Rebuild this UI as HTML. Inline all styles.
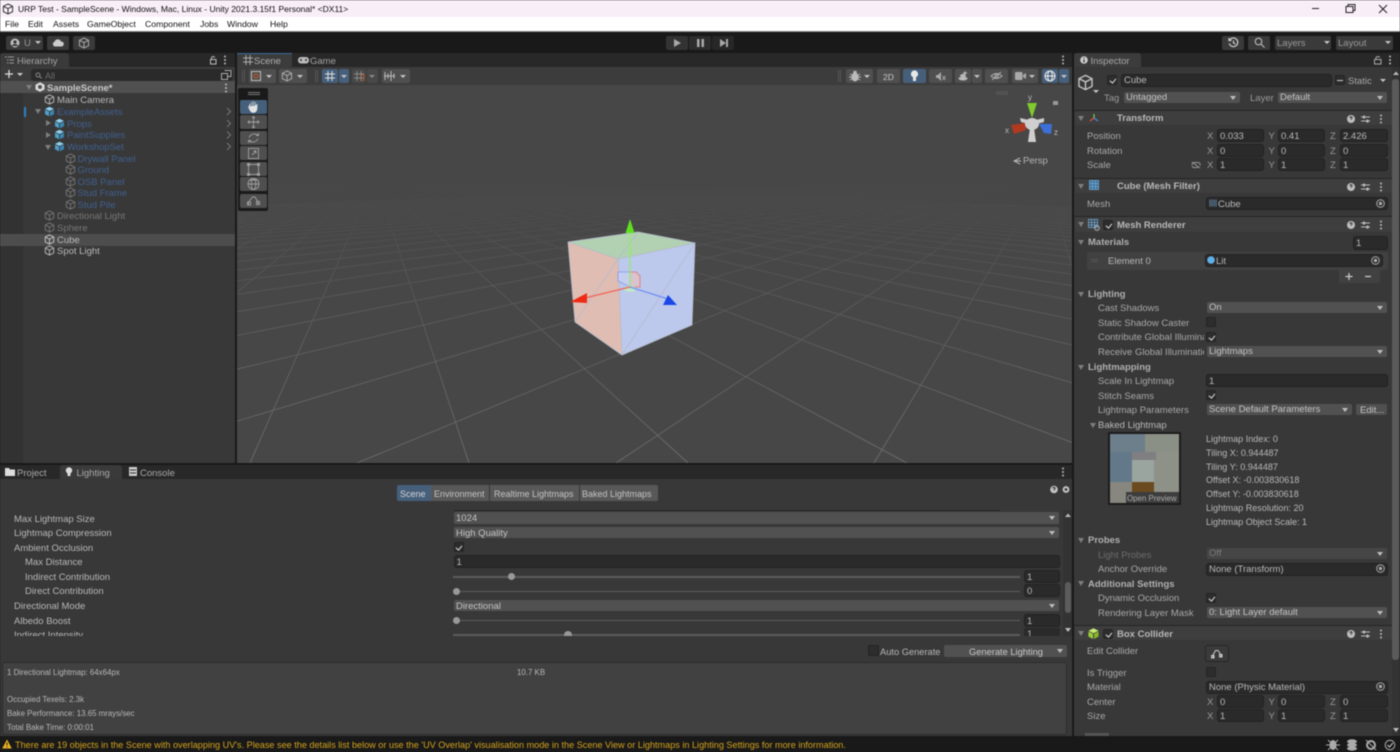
<!DOCTYPE html>
<html lang="en"><head><meta charset="utf-8"><title>URP Test - SampleScene</title>
<style>
html,body{margin:0;padding:0;background:#191919;width:1400px;height:752px;overflow:hidden}
#r{position:relative;width:1400px;height:752px;overflow:hidden;font:9.5px/12px "Liberation Sans",sans-serif;color:#b8b8b8;filter:blur(.4px)}
#r div,#r i,#r b,#r svg{position:absolute;display:block}
i,b{font-style:normal;white-space:nowrap;height:12px;margin-top:1px}
b{font-weight:bold}
.n{margin-top:0}
.dim{color:#777}.blu{color:#40608f}.blk{color:#111}
.dd{background:#515151;border-radius:2px;height:11px;color:#c4c4c4}
.dd>i{left:2px;top:-1px}
.dd:after{content:"";position:absolute;right:4px;top:4px;border:3.5px solid transparent;border-top:4px solid #bdbdbd;border-bottom:0}
.f{background:#2a2a2a;border:1px solid #212121;border-radius:3px;box-sizing:border-box;height:13px}
.f>i{left:2px;top:0}
.cb{background:#2d2d2d;border:1px solid #232323;border-radius:2px;width:10px;height:10px;box-sizing:border-box}
.ck:after{content:"";position:absolute;left:2.5px;top:.5px;width:2.5px;height:5px;border:solid #ddd;border-width:0 1.2px 1.2px 0;transform:rotate(40deg)}
.btn{background:#3a3a3a;border-radius:2px;height:14px}
.tb{background:#4f4f4f;border-radius:2px;height:14px}
.bl{background:#46607c}
.tri{width:0;height:0;border:3.5px solid transparent;border-top:5px solid #7e7e7e;border-bottom:0}
.trr{width:0;height:0;border:3.5px solid transparent;border-left:5px solid #7e7e7e;border-right:0}
.sm{border:3px solid transparent;border-top:3.5px solid #c4c4c4;border-bottom:0;width:0;height:0}
.sep{background:#262626;height:1px}
.hd{background:#3e3e3e;height:14px;left:1075px;width:317px}
.dots{width:2px;height:2px;background:#bbb;box-shadow:0 -3.5px #bbb,0 3.5px #bbb;border-radius:1px}
.s8{font-size:7.9px}
.info{font-size:9.05px;margin-top:0}
</style></head><body><div id="r">
<svg width="0" height="0" style="position:absolute"><defs>
<symbol id="c" viewBox="0 0 12 12"><path d="M6 1 10.6 3.3V8.7L6 11 1.4 8.7V3.3ZM1.4 3.3 6 5.6 10.6 3.3M6 5.6V11" fill="none" stroke="currentColor" stroke-width="1"/></symbol>
<symbol id="p" viewBox="0 0 12 12"><path d="M6 .8 10.8 3.2 6 5.5 1.2 3.2Z" fill="#8fd0ee"/><path d="M1.1 4 5.5 6.2V11.2L1.1 9Z" fill="#4f9fca"/><path d="M10.9 4 6.5 6.2V11.2L10.9 9Z" fill="#3b86b3"/></symbol>
<symbol id="h" viewBox="0 0 42 10"><circle cx="4" cy="5" r="4" fill="#bdbdbd"/><path d="M3 4Q3 2.8 4 2.8 5.2 2.8 5 4 4.2 4.6 4 5.6" stroke="#333" fill="none"/><path d="M14 3H23M14 7H23" stroke="#bbb"/><rect x="16" y="1.6" width="2" height="3" fill="#bbb"/><rect x="19.5" y="5.6" width="2" height="3" fill="#bbb"/></symbol>
</defs></svg>

<!-- title + menu -->
<div style="left:0;top:0;width:1400px;height:17px;background:#f8eef8"></div>
<div style="left:0;top:17px;width:1400px;height:14px;background:#fff"></div>
<div style="left:0;top:31px;width:1400px;height:1px;background:#8a8a8a"></div>
<svg style="left:2px;top:3px" width="12" height="12"><use href="#c" color="#333"/></svg>
<i class="blk" style="left:18px;top:2px;font-size:8.5px">URP Test - SampleScene - Windows, Mac, Linux - Unity 2021.3.15f1 Personal* &lt;DX11&gt;</i>
<i class="blk" style="left:5px;top:17px;font-size:8.7px">File</i>
<i class="blk" style="left:28px;top:17px;font-size:8.7px">Edit</i>
<i class="blk" style="left:53px;top:17px;font-size:8.7px">Assets</i>
<i class="blk" style="left:87px;top:17px;font-size:8.7px">GameObject</i>
<i class="blk" style="left:145px;top:17px;font-size:8.7px">Component</i>
<i class="blk" style="left:200px;top:17px;font-size:8.7px">Jobs</i>
<i class="blk" style="left:227px;top:17px;font-size:8.7px">Window</i>
<i class="blk" style="left:270px;top:17px;font-size:8.7px">Help</i>
<svg style="left:1310px;top:2px" width="85" height="12" fill="none" stroke="#222"><path d="M2 6.5H9"/><path d="M36 4.5H43V10.500H36ZM38 4.500V2.500H45V8.500H43"/><path d="M69 3 77 11M77 3 69 11"/></svg>

<!-- main toolbar -->
<div class="btn" style="left:6px;top:36px;width:37px"></div>
<svg style="left:10px;top:38px" width="10" height="10"><circle cx="5" cy="5" r="4.500" fill="#bbb"/><circle cx="5" cy="4" r="1.600" fill="#333"/><path d="M2 8Q5 5 8 8" stroke="#333" fill="#333"/></svg>
<i style="left:24px;top:37px;color:#999">U</i><div class="sm" style="left:35px;top:41px"></div>
<div class="btn" style="left:47px;top:36px;width:22px"></div>
<svg style="left:52px;top:38px" width="12" height="9"><path d="M3 8.500A2.500 2.500 0 0 1 2.500 3.700 3.500 3.500 0 0 1 9 3.500 2.500 2.500 0 0 1 9.500 8.500Z" fill="#ccc"/></svg>
<div class="btn" style="left:73px;top:36px;width:22px"></div>
<svg style="left:78px;top:37px" width="12" height="12" color="#aaa"><use href="#c"/></svg>
<div class="btn" style="left:666px;top:36px;width:22px;background:#333"></div>
<div class="btn" style="left:689px;top:36px;width:22px;background:#2d2d2d"></div>
<div class="btn" style="left:712px;top:36px;width:22px;background:#272727"></div>
<svg style="left:666px;top:36px" width="70" height="14" fill="#a8a8a8"><path d="M8 3 15 7 8 11Z"/><path d="M31 3H33.500V11H31ZM35.500 3H38V11H35.500Z"/><path d="M54 3 60 7 54 11ZM60 3H62V11H60Z"/></svg>
<div class="btn" style="left:1222px;top:36px;width:22px"></div>
<svg style="left:1228px;top:37px" width="11" height="11" fill="none" stroke="#ccc" stroke-width="1.200"><path d="M1.800 3A4.300 4.300 0 1 1 1.300 6.500M1 1V3.500H3.500M5.500 3.500V6L7.500 7"/></svg>
<div class="btn" style="left:1248px;top:36px;width:22px"></div>
<svg style="left:1254px;top:37px" width="11" height="11" fill="none" stroke="#bbb" stroke-width="1.100"><circle cx="4.500" cy="4.500" r="3.300"/><path d="M7 7 10.500 10.500"/></svg>
<div class="btn" style="left:1275px;top:36px;width:56px"></div><i class="dim" style="left:1277px;top:37px;color:#999">Layers</i><div class="sm" style="left:1324px;top:41px"></div>
<div class="btn" style="left:1336px;top:36px;width:57px"></div><i class="dim" style="left:1338px;top:37px;color:#999">Layout</i><div class="sm" style="left:1385px;top:41px"></div>

<!-- hierarchy -->
<div style="left:0;top:53px;width:235px;height:14px;background:#282828"></div>
<div style="left:0;top:53px;width:69px;height:14px;background:#3a3a3a;border-radius:3px 3px 0 0"></div>
<svg style="left:5px;top:56px" width="10" height="8" stroke="#999"><path d="M0 1H2M3 1H9M2 4H3.500M4.500 4H9M2 7H3.500M4.500 7H9"/></svg>
<i style="left:17px;top:55px;color:#a5a5a5">Hierarchy</i>
<svg style="left:208px;top:55px" width="10" height="10" fill="none" stroke="#bbb"><path d="M2.500 4.500H8V9H2.500ZM3.500 4.500V2.500Q5 .5 6.800 2.500"/></svg>
<div class="dots" style="left:224px;top:59px"></div>
<div style="left:0;top:67px;width:235px;height:397px;background:#383838"></div>
<div style="left:0;top:67px;width:235px;height:14px;background:#3c3c3c"></div>
<div style="left:0;top:93px;width:23px;height:371px;background:#323232"></div>
<svg style="left:4px;top:69px" width="20" height="10" stroke="#ddd"><path d="M5 1V9M1 5H9" stroke-width="1.300"/><path d="M13 4H19L16 7Z" fill="#ccc" stroke="none"/></svg>
<div style="left:31px;top:69px;width:202px;height:12px;background:#2a2a2a;border-radius:3px"></div>
<svg style="left:35px;top:72px" width="8" height="7" fill="none" stroke="#888"><circle cx="3" cy="3" r="2"/><path d="M4.500 4.500 7 6.500"/></svg>
<i style="left:45px;top:69px;color:#6c6c6c;font-size:9px">All</i>
<svg style="left:221px;top:70px" width="11" height="10" fill="none" stroke="#aaa"><path d="M3.500 .5H10V6.500H7M.5 3.500H6.500V9.500H.5Z"/></svg>
<div style="left:0;top:81px;width:235px;height:12px;background:#505050"></div>
<div class="tri" style="left:26px;top:85px"></div>
<svg style="left:35px;top:82px" width="10" height="10" color="#ddd"><path d="M5 .3 9.500 2.800V7.500L5 9.800.5 7.500V2.800Z" fill="#ddd"/><circle cx="5" cy="5" r="2" fill="#505050"/></svg>
<b style="left:47px;top:82px;color:#c8c8c8">SampleScene*</b>
<div class="dots" style="left:225px;top:87px"></div>
<div style="left:0;top:234px;width:235px;height:12px;background:#4d4d4d"></div>
<div style="left:24px;top:107px;width:1.500px;height:10px;background:#2f7fc0"></div>

<svg style="left:44px;top:94px" width="11" height="11" color="#bbb"><use href="#c"/></svg><i style="left:57px;top:94px">Main Camera</i>
<div class="tri" style="left:35px;top:109px"></div><svg style="left:44px;top:106px" width="11" height="11"><use href="#p"/></svg><i class="blu" style="left:57px;top:106px">ExampleAssets</i>
<div class="trr" style="left:46px;top:120px"></div><svg style="left:54px;top:118px" width="11" height="11"><use href="#p"/></svg><i class="blu" style="left:67px;top:118px">Props</i>
<div class="trr" style="left:46px;top:132px"></div><svg style="left:54px;top:129px" width="11" height="11"><use href="#p"/></svg><i class="blu" style="left:67px;top:129px">PaintSupplies</i>
<div class="tri" style="left:45px;top:145px"></div><svg style="left:54px;top:141px" width="11" height="11"><use href="#p"/></svg><i class="blu" style="left:67px;top:141px">WorkshopSet</i>
<svg style="left:65px;top:153px" width="11" height="11" color="#777"><use href="#c"/></svg><i class="blu" style="left:77.500px;top:153px">Drywall Panel</i>
<svg style="left:65px;top:164px" width="11" height="11" color="#777"><use href="#c"/></svg><i class="blu" style="left:77.500px;top:164px">Ground</i>
<svg style="left:65px;top:176px" width="11" height="11" color="#777"><use href="#c"/></svg><i class="blu" style="left:77.500px;top:176px">OSB Panel</i>
<svg style="left:65px;top:187px" width="11" height="11" color="#777"><use href="#c"/></svg><i class="blu" style="left:77.500px;top:187px">Stud Frame</i>
<svg style="left:65px;top:199px" width="11" height="11" color="#777"><use href="#c"/></svg><i class="blu" style="left:77.500px;top:199px">Stud Pile</i>
<svg style="left:44px;top:210px" width="11" height="11" color="#777"><use href="#c"/></svg><i class="dim" style="left:57px;top:210px">Directional Light</i>
<svg style="left:44px;top:222px" width="11" height="11" color="#777"><use href="#c"/></svg><i class="dim" style="left:57px;top:222px">Sphere</i>
<svg style="left:44px;top:234px" width="11" height="11" color="#ccc"><use href="#c"/></svg><i style="left:57px;top:234px">Cube</i>
<svg style="left:44px;top:245px" width="11" height="11" color="#bbb"><use href="#c"/></svg><i style="left:57px;top:245px">Spot Light</i>
<svg style="left:226px;top:107px" width="6" height="46" fill="none" stroke="#777"><path d="M1 1 4.500 4.500 1 8M1 13 4.500 16.500 1 20M1 24.500 4.500 28 1 31.500M1 36 4.500 39.500 1 43"/></svg>

<!-- scene -->
<div style="left:237px;top:53px;width:835px;height:14px;background:#282828"></div>
<div style="left:237px;top:53px;width:55px;height:14px;background:#3c3c3c"></div>
<div style="left:237px;top:53px;width:55px;height:1px;background:#3a6c9c"></div>
<svg style="left:243px;top:55px" width="10" height="10" stroke="#aaa"><path d="M3 0V10M7 0V10M0 3H10M0 7H10"/></svg>
<i style="left:254px;top:55px;color:#b0b0b0">Scene</i>
<svg style="left:298px;top:57px" width="11" height="7"><rect width="11" height="6.500" rx="3" fill="#bbb"/><circle cx="3" cy="3" r="1" fill="#333"/><circle cx="8" cy="3" r="1" fill="#333"/></svg>
<i style="left:310px;top:55px;color:#a5a5a5">Game</i>
<div class="dots" style="left:1062px;top:59px"></div>
<div style="left:237px;top:67px;width:835px;height:18px;background:#3c3c3c"></div>
<div class="tb" style="left:249px;top:69px;width:27px"></div><svg style="left:251px;top:71px" width="10" height="10" fill="none" stroke="#bbb"><rect x=".5" y=".5" width="9" height="9"/><circle cx="5" cy="5" r="2" stroke="#c8552a"/></svg><div class="sm" style="left:266px;top:75px"></div>
<div class="tb" style="left:279px;top:69px;width:28px"></div><svg style="left:281px;top:70px" width="12" height="12" color="#aaa"><use href="#c"/></svg><div class="sm" style="left:297px;top:75px"></div>
<div class="tb bl" style="left:322px;top:69px;width:16px"></div><div class="tb bl" style="left:339px;top:69px;width:10px"></div>
<svg style="left:325px;top:71px" width="11" height="10" stroke="#ddd"><path d="M3 0V10M7 0V10M0 3H10M0 7H10"/></svg><div class="sm" style="left:341px;top:75px"></div>
<div class="tb" style="left:352px;top:69px;width:14px;background:#484848"></div><div class="tb" style="left:367px;top:69px;width:11px;background:#484848"></div>
<svg style="left:354px;top:71px" width="11" height="10" stroke="#8a8a8a" fill="none"><path d="M3 0V10M7 0V10M0 3H10M0 7H10"/><path d="M6 4H10V8Q10 10 7 10" stroke="#b5532a"/></svg><div class="sm" style="left:369px;top:75px;border-top-color:#888"></div>
<div class="tb" style="left:382px;top:69px;width:28px"></div>
<svg style="left:384px;top:71px" width="12" height="10" stroke="#bbb"><path d="M1 1V9M4 2.500V7.500M7 0V10M10 2.500V7.500M0 5H11"/></svg><div class="sm" style="left:400px;top:75px"></div>
<div style="left:242px;top:70px;width:1px;height:12px;background:#555;box-shadow:2px 0 #555"></div>
<div style="left:315px;top:70px;width:1px;height:12px;background:#555;box-shadow:2px 0 #555"></div>
<div style="left:838px;top:70px;width:1px;height:12px;background:#555;box-shadow:2px 0 #555"></div>
<div class="tb" style="left:846px;top:69px;width:27px"></div><svg style="left:849px;top:70px" width="12" height="12" fill="#bbb"><ellipse cx="6" cy="7" rx="3.500" ry="4.500"/><circle cx="6" cy="2.500" r="1.800"/><path d="M1 4 11 10M11 4 1 10M0 7H12" stroke="#bbb" fill="none"/></svg><div class="sm" style="left:864px;top:75px"></div>
<div class="tb" style="left:877px;top:69px;width:23px"></div><b style="left:883px;top:70px;font-size:8.500px;font-weight:normal;color:#c8c8c8">2D</b>
<div class="tb bl" style="left:903px;top:69px;width:23px"></div><svg style="left:910px;top:70px" width="9" height="12" fill="#e8e8e8"><circle cx="4.500" cy="4" r="3.600"/><rect x="3" y="7" width="3" height="4"/></svg>
<div class="tb" style="left:929px;top:69px;width:23px"></div><svg style="left:936px;top:72px" width="10" height="9" fill="#aaa"><path d="M0 3H2L5 0V9L2 6H0Z"/><path d="M6.500 4 9.500 8M9.500 4 6.500 8" stroke="#aaa"/></svg>
<div class="tb" style="left:955px;top:69px;width:16px"></div><div class="tb" style="left:972px;top:69px;width:10px"></div><svg style="left:958px;top:71px" width="11" height="10" fill="#bbb"><ellipse cx="5" cy="7.500" rx="4.500" ry="2"/><ellipse cx="5" cy="4.500" rx="3" ry="1.500"/><path d="M7 0 8 1.500 10 2 8 2.500 7 4 6 2.500 4 2 6 1.500Z"/></svg><div class="sm" style="left:974px;top:75px"></div>
<div class="tb" style="left:985px;top:69px;width:23px"></div><svg style="left:990px;top:71px" width="13" height="10" fill="none" stroke="#aaa"><path d="M1 5Q6.500 0 12 5 6.500 10 1 5Z"/><circle cx="6.500" cy="5" r="1.800"/><path d="M2 9 11 1"/></svg>
<div class="tb" style="left:1012px;top:69px;width:26px"></div><svg style="left:1015px;top:72px" width="11" height="8" fill="#aaa"><rect width="7.500" height="8" rx="1"/><path d="M8 3 11 1V7L8 5Z"/></svg><div class="sm" style="left:1029px;top:75px"></div>
<div class="tb bl" style="left:1042px;top:69px;width:16px"></div><div class="tb bl" style="left:1059px;top:69px;width:10px"></div>
<svg style="left:1044px;top:70px" width="12" height="12" fill="none" stroke="#e8e8e8" stroke-width="1.100"><circle cx="6" cy="6" r="5"/><ellipse cx="6" cy="6" rx="2.300" ry="5"/><path d="M1 6H11"/></svg><div class="sm" style="left:1061px;top:75px"></div>

<svg style="left:237px;top:85px" width="835" height="378" viewBox="237 85 835 378">
<defs><linearGradient id="gr" gradientUnits="userSpaceOnUse" x1="0" y1="178" x2="0" y2="463"><stop offset="0" stop-color="#fff" stop-opacity="0"/><stop offset=".12" stop-color="#fff" stop-opacity=".02"/><stop offset=".3" stop-color="#fff" stop-opacity=".07"/><stop offset=".6" stop-color="#fff" stop-opacity=".13"/><stop offset="1" stop-color="#fff" stop-opacity=".2"/></linearGradient></defs>
<rect x="237" y="85" width="835" height="378" fill="#474747"/>
<path fill="none" stroke="url(#gr)" stroke-width=".9" d="M375 178L-6101 463M375 178L-5882 463M375 178L-5663 463M375 178L-5444 463M375 178L-5225 463M375 178L-5006 463M375 178L-4787 463M375 178L-4568 463M375 178L-4349 463M375 178L-4130 463M375 178L-3911 463M375 178L-3692 463M375 178L-3473 463M375 178L-3254 463M375 178L-3035 463M375 178L-2816 463M375 178L-2597 463M375 178L-2378 463M375 178L-2159 463M375 178L-1940 463M375 178L-1721 463M375 178L-1502 463M375 178L-1283 463M375 178L-1064 463M375 178L-845 463M375 178L-626 463M375 178L-407 463M375 178L-188 463M375 178L31 463M375 178L250 463M375 178L469 463M375 178L688 463M375 178L907 463M375 178L1126 463M375 178L1345 463M375 178L1564 463M375 178L1783 463M375 178L2002 463M375 178L2221 463M375 178L2440 463M375 178L2659 463M375 178L2878 463M375 178L3097 463M375 178L3316 463M375 178L3535 463M375 178L3754 463M375 178L3973 463M375 178L4192 463M375 178L4411 463M375 178L4630 463M375 178L4849 463M375 178L5068 463M375 178L5287 463M375 178L5506 463M375 178L5725 463M375 178L5944 463M375 178L6163 463M375 178L6382 463M375 178L6601 463M375 178L6820 463M375 178L7039 463
M1045 178L-7398 463M1045 178L-7139 463M1045 178L-6881 463M1045 178L-6622 463M1045 178L-6364 463M1045 178L-6105 463M1045 178L-5847 463M1045 178L-5588 463M1045 178L-5330 463M1045 178L-5071 463M1045 178L-4813 463M1045 178L-4554 463M1045 178L-4296 463M1045 178L-4037 463M1045 178L-3779 463M1045 178L-3520 463M1045 178L-3262 463M1045 178L-3003 463M1045 178L-2745 463M1045 178L-2486 463M1045 178L-2228 463M1045 178L-1969 463M1045 178L-1711 463M1045 178L-1452 463M1045 178L-1194 463M1045 178L-935 463M1045 178L-677 463M1045 178L-418 463M1045 178L-160 463M1045 178L98 463M1045 178L357 463M1045 178L616 463M1045 178L874 463M1045 178L1132 463M1045 178L1391 463M1045 178L1650 463M1045 178L1908 463M1045 178L2167 463M1045 178L2425 463M1045 178L2684 463M1045 178L2942 463M1045 178L3200 463M1045 178L3459 463M1045 178L3718 463M1045 178L3976 463"/>
<!-- cube -->
<path d="M638 232 695 243 618 259 568 242Z" fill="#b2d0b2"/>
<path d="M568 242 618 259 622 355 575 322Z" fill="#e0bdb2"/>
<path d="M618 259 695 243 692 325 622 355Z" fill="#bcc8ec"/>
<path d="M638 232 695 243 692 325 622 355 575 322 568 242ZM568 242 618 259 695 243M618 259 622 355M618 259 575 322M695 243 622 355M638 232 618 259" fill="none" stroke="#b4bccb" stroke-width=".8"/>
<path d="M618 272H630V287L618 281Z" fill="#c6cef0" stroke="#7d9aea" stroke-width=".8"/><path d="M630 272 636 272 640 276V287L630 287Z" fill="#d9c3cf" stroke="#e0736a" stroke-width=".8"/>
<ellipse cx="630" cy="289" rx="6" ry="3" fill="#bfe8c8"/>
<path d="M630 287V226" stroke="#8cf060" stroke-width="1.200"/>
<path d="M630 219 634.500 233H625.500Z" fill="#5fe01e"/>
<path d="M630 287 585 298" stroke="#f0655a" stroke-width="1.200"/>
<path d="M570 302 587 293 587 303Z" fill="#ee2a15"/>
<path d="M630 287 668 299" stroke="#6d8ff2" stroke-width="1.200"/>
<path d="M663 305 668 295 677 305Z" fill="#1a48e8"/>
<!-- gizmo -->
<path d="M1027 103H1037L1032 118Z" fill="#7fc92e"/>
<path d="M1011 125 1025 123 1026 130 1014 134Z" fill="#b03a20"/>
<path d="M1039 124 1052 124 1051 134 1044 133Z" fill="#3c70d8"/>
<g fill="#cfcfcf"><ellipse cx="1032" cy="124" rx="7" ry="6"/><path d="M1020 118 1029 120 1028 124 1021 122Z"/><path d="M1044 118 1036 120 1037 124 1044 122Z"/><path d="M1030 128H1034L1036 142H1028Z"/></g>
<path d="M996 92H1008M996 94H1008" stroke="#5c5c5c"/>
<rect x="1053" y="101" width="5" height="4" fill="#999"/>
<path d="M1020 164 1014 161 1020 158M1014 161H1021" stroke="#bbb" fill="none"/>
<text x="1023" y="163.500" font-family="Liberation Sans" font-size="9.500" fill="#b5b5b5">Persp</text>
<text x="1030" y="100" font-family="Liberation Sans" font-size="8" fill="#bbb" text-anchor="middle">y</text>
<text x="1005" y="133" font-family="Liberation Sans" font-size="8" fill="#bbb">x</text>
<text x="1054" y="135" font-family="Liberation Sans" font-size="8" fill="#bbb">z</text>
</svg>
<!-- tool palette -->
<div style="left:238px;top:88px;width:30px;height:123px;background:#1a1a1a;border-radius:2px"></div>
<div style="left:248px;top:92px;width:12px;height:1px;background:#777;box-shadow:0 2px #777"></div>
<div class="tb bl" style="left:240px;top:100px;width:27px"></div>
<div class="tb" style="left:240px;top:115px;width:27px"></div>
<div class="tb" style="left:240px;top:131px;width:27px"></div>
<div class="tb" style="left:240px;top:146px;width:27px"></div>
<div class="tb" style="left:240px;top:162px;width:27px"></div>
<div class="tb" style="left:240px;top:177px;width:27px"></div>
<div class="tb" style="left:240px;top:194px;width:27px"></div>
<svg style="left:240px;top:100px" width="27" height="108" fill="none" stroke="#a0a0a0" stroke-width=".9">
<path d="M8.500 7 10 9.500V3.500M11.800 7V1.800M13.500 7V1.300M15.300 7V2M15.300 6 17 4.500 V8Q17 12.500 13 12.500 10.500 12.500 8.500 7Z" fill="#e4e4e4" stroke="#e4e4e4" stroke-width=".7"/>
<path d="M13.500 16.500V28M8 22H19M12 18 13.500 16.500 15 18M12 26.500 13.500 28 15 26.500M9.500 20.500 8 22 9.500 23.500M17.500 20.500 19 22 17.500 23.500"/>
<path d="M18.500 35.500A6 6 0 0 0 9 37.500M8.500 40.500A6 6 0 0 0 18 38.500M16 35.500H18.500V33M11 40.500H8.500V43"/>
<rect x="8.500" y="48.500" width="10" height="10"/><path d="M12 55 16 51M13.500 51H16V53.500"/>
<rect x="8.500" y="64.500" width="10" height="10"/><g fill="#aaa"><rect x="7.500" y="63.500" width="2" height="2"/><rect x="17.500" y="63.500" width="2" height="2"/><rect x="7.500" y="73.500" width="2" height="2"/><rect x="17.500" y="73.500" width="2" height="2"/></g>
<circle cx="13.500" cy="84" r="5.500"/><ellipse cx="13.500" cy="84" rx="2.300" ry="5.500"/><path d="M8 84H19M9 80H18"/>
<path d="M8.500 105V102L12.500 97H15L18 102M18 102V105"/><rect x="7.500" y="102" width="3" height="3"/><rect x="16.500" y="101.500" width="3" height="3"/>
</svg>

<!-- lighting panel -->
<div style="left:0;top:465px;width:1072px;height:14px;background:#282828"></div>
<div style="left:60px;top:465px;width:62px;height:14px;background:#3a3a3a;border-radius:3px 3px 0 0"></div>
<svg style="left:5px;top:468px" width="10" height="8" fill="#ddd"><path d="M0 0H4L5 1.500H10V8H0Z"/></svg>
<i style="left:17px;top:467px;color:#aaa">Project</i>
<svg style="left:65px;top:467px" width="8" height="10" fill="#ddd"><circle cx="4" cy="3.500" r="3.200"/><rect x="2.500" y="6" width="3" height="3"/></svg>
<i style="left:76.500px;top:467px;color:#aaa">Lighting</i>
<svg style="left:129px;top:467px" width="8" height="9" fill="#ccc"><rect width="8" height="9"/><path d="M1 3H7M1 6H7" stroke="#333"/></svg>
<i style="left:140px;top:467px;color:#aaa">Console</i>
<div class="dots" style="left:1062px;top:471px"></div>
<div style="left:0;top:479px;width:1072px;height:257px;background:#383838"></div>
<div style="left:397px;top:485px;width:34px;height:16px;background:#46607c;border-radius:2px 0 0 2px"></div>
<div style="left:431px;top:485px;width:58px;height:16px;background:#585858"></div>
<div style="left:490px;top:485px;width:89px;height:16px;background:#585858"></div>
<div style="left:579.500px;top:485px;width:78.500px;height:16px;background:#585858;border-radius:0 2px 2px 0"></div>
<i style="left:400px;top:487px;color:#d4d4d4;font-size:9px">Scene</i>
<i style="left:434px;top:487px;color:#c4c4c4;font-size:9px">Environment</i>
<i style="left:494px;top:487px;color:#c4c4c4;font-size:9px">Realtime Lightmaps</i>
<i style="left:582px;top:487px;color:#c4c4c4;font-size:9px">Baked Lightmaps</i>
<svg style="left:1050px;top:485px" width="22" height="9"><circle cx="4" cy="4.500" r="3.800" fill="#c4c4c4"/><path d="M2.800 3.500Q3 2.300 4.100 2.300 5.300 2.500 5 3.800 4 4.500 4 5.500" stroke="#333" fill="none"/><circle cx="16" cy="4.500" r="2.400" fill="none" stroke="#c4c4c4" stroke-width="2"/></svg>
<div style="left:454px;top:510px;width:546px;height:1px;background:#262626"></div>
<i style="left:14px;top:512.500px">Max Lightmap Size</i>
<i style="left:14px;top:527px">Lightmap Compression</i>
<i style="left:14px;top:541.500px">Ambient Occlusion</i>
<i style="left:25px;top:556px">Max Distance</i>
<i style="left:25px;top:570.500px">Indirect Contribution</i>
<i style="left:25px;top:585px">Direct Contribution</i>
<i style="left:14px;top:600px">Directional Mode</i>
<i style="left:14px;top:614.500px">Albedo Boost</i>
<div style="left:14px;top:629px;width:100px;height:7px;overflow:hidden"><i style="left:0;top:0">Indirect Intensity</i></div>
<div class="dd" style="left:454px;top:512px;width:605px;height:12px"><i style="top:0">1024</i></div>
<div class="dd" style="left:454px;top:527px;width:605px"><i style="top:0">High Quality</i></div>
<div class="cb ck" style="left:453.500px;top:542px"></div>
<div class="f" style="left:453.500px;top:555px;width:606px"><i>1</i></div>
<div style="left:453px;top:576px;width:567px;height:1.500px;background:#5c5c5c"></div><div style="left:508px;top:573px;width:7px;height:7px;border-radius:50%;background:#999"></div>
<div class="f" style="left:1024px;top:570px;width:36px"><i>1</i></div>
<div style="left:453px;top:590.500px;width:567px;height:1.500px;background:#5c5c5c"></div><div style="left:453px;top:587.500px;width:7px;height:7px;border-radius:50%;background:#999"></div>
<div class="f" style="left:1024px;top:584px;width:36px"><i>0</i></div>
<div class="dd" style="left:454px;top:600px;width:605px"><i style="top:0">Directional</i></div>
<div style="left:453px;top:619.500px;width:567px;height:1.500px;background:#5c5c5c"></div><div style="left:453px;top:616.500px;width:7px;height:7px;border-radius:50%;background:#999"></div>
<div class="f" style="left:1024px;top:614px;width:36px"><i>1</i></div>
<div style="left:453px;top:634px;width:567px;height:1.500px;background:#5c5c5c"></div>
<div style="left:564px;top:631px;width:8px;height:4.500px;border-radius:4px 4px 0 0;background:#999"></div>
<div style="left:1024px;top:628px;width:36px;height:7.500px;background:#2a2a2a;overflow:hidden"><i style="left:3px;top:0">1</i></div>
<div style="left:1063px;top:510px;width:9px;height:126px;background:#333"></div>
<div style="left:1064.500px;top:582px;width:6px;height:31px;background:#5c5c5c;border-radius:3px"></div>
<svg style="left:1064px;top:512px" width="8" height="122" fill="#bbb"><path d="M1 5 4 1.500 7 5ZM1 116 4 120 7 116Z"/></svg>
<div class="cb" style="left:868px;top:645px;width:11px;height:11px"></div>
<i style="left:880px;top:645px;font-size:9.300px">Auto Generate</i>
<div class="dd" style="left:944px;top:645px;width:123px;height:12px"></div>
<i style="left:969px;top:645px;font-size:9.300px;color:#c8c8c8">Generate Lighting</i>
<div style="left:2px;top:662px;width:1065px;height:73px;background:#414141;border:1px solid #2c2c2c;border-radius:3px;box-sizing:border-box"></div>
<i class="s8" style="left:7px;top:665.500px">1 Directional Lightmap: 64x64px</i>
<i class="s8" style="left:517px;top:665.500px">10.7 KB</i>
<i class="s8" style="left:7px;top:693px">Occupied Texels: 2.3k</i>
<i class="s8" style="left:7px;top:707px">Bake Performance: 13.65 mrays/sec</i>
<i class="s8" style="left:7px;top:721px">Total Bake Time: 0:00:01</i>

<!-- inspector -->
<div style="left:1074px;top:53px;width:326px;height:14px;background:#282828"></div>
<div style="left:1074px;top:53px;width:67px;height:14px;background:#3c3c3c;border-radius:3px 3px 0 0"></div>
<svg style="left:1080px;top:56px" width="8" height="8"><circle cx="4" cy="4" r="3.800" fill="#ccc"/><path d="M4 1.500V2.500M4 3.500V6.500" stroke="#333" stroke-width="1.200"/></svg>
<i style="left:1090.500px;top:55px;color:#a8a8a8">Inspector</i>
<svg style="left:1373px;top:55px" width="10" height="10" fill="none" stroke="#aaa"><path d="M1.500 4.500H8V9H1.500ZM3 4.500V2.500Q5 .5 6.800 2.500"/></svg>
<div class="dots" style="left:1389px;top:59px"></div>
<div style="left:1074px;top:67px;width:326px;height:669px;background:#383838"></div>
<div style="left:1392px;top:67px;width:8px;height:669px;background:#333"></div>
<div style="left:1392px;top:79px;width:6.500px;height:581px;background:#5a5a5a;border-radius:3px"></div>
<svg style="left:1391.500px;top:70px" width="8" height="664" fill="#bbb"><path d="M1 5 4 1.500 7 5ZM1 658 4 662 7 658Z"/></svg>
<svg style="left:1077px;top:74px" width="17" height="17" color="#c4c4c4"><use href="#c"/></svg>
<div class="sm" style="left:1093px;top:90px"></div>
<div class="cb ck" style="left:1107px;top:75px"></div>
<div class="f" style="left:1121px;top:74px;width:211px"><i class="n">Cube</i></div>
<div class="cb" style="left:1335px;top:75px"></div><div style="left:1337px;top:79.500px;width:6px;height:1.500px;background:#ccc"></div>
<i style="left:1348px;top:74.500px;color:#a8a8a8">Static</i><div class="sm" style="left:1380px;top:79px"></div>
<i class="dim" style="left:1104px;top:92px;color:#999">Tag</i>
<div class="dd" style="left:1124px;top:92px;width:116px"><i style="top:-1px">Untagged</i></div>
<i class="dim" style="left:1250px;top:92px;color:#999">Layer</i>
<div class="dd" style="left:1278px;top:92px;width:109px"><i style="top:-1px">Default</i></div>

<div class="sep" style="left:1074px;top:110px;width:318px"></div>
<div class="hd" style="top:111px"></div>
<div class="tri" style="left:1078px;top:116px"></div>
<svg style="left:1089px;top:113px" width="10" height="10" fill="none" stroke-width="1.300"><path d="M5 5V1" stroke="#7fc92e"/><path d="M5 5 1 8" stroke="#e0513a"/><path d="M5 5 9 8" stroke="#4a86e0"/></svg>
<b style="left:1117px;top:112px">Transform</b>
<svg style="left:1347px;top:114px" width="24" height="9"><use href="#h" width="42" height="10" x="0" y="0"/></svg>
<div class="dots" style="left:1380px;top:117.500px"></div>
<i style="left:1087px;top:130px;color:#a8a8a8">Position</i><i style="left:1087px;top:144.500px;color:#a8a8a8">Rotation</i><i style="left:1087px;top:159px;color:#a8a8a8">Scale</i>
<svg style="left:1191px;top:161px" width="10" height="8" fill="none" stroke="#999"><path d="M1 4Q1 1.500 4 1.500H7Q9.500 2 9 4.500M1 1 9 7"/><path d="M1 5Q2 7 4 6.500H7"/></svg>
<i class="dim" style="left:1207px;top:130px;color:#999">X</i><div class="f" style="left:1217px;top:129px;width:47px"><i>0.033</i></div>
<i class="dim" style="left:1268.500px;top:130px;color:#999">Y</i><div class="f" style="left:1278px;top:129px;width:47px"><i>0.41</i></div>
<i class="dim" style="left:1330px;top:130px;color:#999">Z</i><div class="f" style="left:1340px;top:129px;width:48px"><i>2.426</i></div>
<i class="dim" style="left:1207px;top:144.500px;color:#999">X</i><div class="f" style="left:1217px;top:143.500px;width:47px"><i>0</i></div>
<i class="dim" style="left:1268.500px;top:144.500px;color:#999">Y</i><div class="f" style="left:1278px;top:143.500px;width:47px"><i>0</i></div>
<i class="dim" style="left:1330px;top:144.500px;color:#999">Z</i><div class="f" style="left:1340px;top:143.500px;width:48px"><i>0</i></div>
<i class="dim" style="left:1207px;top:159px;color:#999">X</i><div class="f" style="left:1217px;top:158px;width:47px"><i>1</i></div>
<i class="dim" style="left:1268.500px;top:159px;color:#999">Y</i><div class="f" style="left:1278px;top:158px;width:47px"><i>1</i></div>
<i class="dim" style="left:1330px;top:159px;color:#999">Z</i><div class="f" style="left:1340px;top:158px;width:48px"><i>1</i></div>

<div class="sep" style="left:1074px;top:178px;width:318px"></div>
<div class="hd" style="top:179px"></div>
<div class="tri" style="left:1078px;top:184px"></div>
<svg style="left:1089px;top:180px" width="10" height="10" fill="#3d6d92" stroke="#6fa9d6" stroke-width=".8"><rect x=".5" y=".5" width="9" height="9"/><path d="M3.500 .5V9.500M6.500 .5V9.500M.5 3.500H9.500M.5 6.500H9.500" fill="none"/></svg>
<b style="left:1117px;top:180px">Cube (Mesh Filter)</b>
<svg style="left:1347px;top:182px" width="24" height="9"><use href="#h" width="42" height="10"/></svg>
<div class="dots" style="left:1380px;top:185.500px"></div>
<i style="left:1087px;top:198px;color:#a8a8a8">Mesh</i>
<div class="f" style="left:1206px;top:197px;width:182px"></div>
<svg style="left:1209px;top:199px" width="8" height="8" fill="none" stroke="#6f9dc8" stroke-width=".8"><path d="M1 .5V7.500M3 .5V7.500M5 .5V7.500M7 .5V7.500"/></svg>
<i style="left:1218px;top:197.500px">Cube</i>
<svg style="left:1375px;top:198px" width="11" height="11" fill="none" stroke="#aaa"><circle cx="5.500" cy="5.500" r="3.800"/><circle cx="5.500" cy="5.500" r="1.200" fill="#aaa"/></svg>

<div class="sep" style="left:1074px;top:216px;width:318px"></div>
<div class="hd" style="top:217px;height:15px"></div>
<div class="tri" style="left:1078px;top:222px"></div>
<svg style="left:1088px;top:219px" width="12" height="12" fill="none" stroke="#6fa9d6" stroke-width=".8"><rect x=".5" y=".5" width="9" height="8"/><path d="M3.500 .5V8.500M6.500 .5V8.500M.5 3.500H9.500M.5 6H9.500"/><circle cx="9" cy="9" r="2.300" stroke="#ccc"/></svg>
<div class="cb ck" style="left:1103px;top:220px"></div>
<b style="left:1117px;top:219px">Mesh Renderer</b>
<svg style="left:1347px;top:220px" width="24" height="9"><use href="#h" width="42" height="10"/></svg>
<div class="dots" style="left:1380px;top:224px"></div>
<div class="tri" style="left:1078px;top:240px"></div>
<b style="left:1088px;top:236px;color:#b0b0b0">Materials</b>
<div class="f" style="left:1353px;top:235.500px;width:35px;height:14px"><i>1</i></div>
<div style="left:1087px;top:252px;width:301px;height:17.500px;background:#414141;border-radius:2px"></div>
<div style="left:1091px;top:259px;width:7px;height:1px;background:#555;box-shadow:0 2px #555"></div>
<i style="left:1108px;top:255px">Element 0</i>
<div class="f" style="left:1205px;top:254px;width:178px"></div>
<svg style="left:1207px;top:256px" width="8" height="8"><circle cx="4" cy="4" r="3.800" fill="#5fb0ea"/></svg>
<i style="left:1216px;top:254.500px">Lit</i>
<svg style="left:1370px;top:255px" width="11" height="11" fill="none" stroke="#aaa"><circle cx="5.500" cy="5.500" r="3.800"/><circle cx="5.500" cy="5.500" r="1.200" fill="#aaa"/></svg>
<div style="left:1339px;top:270px;width:41px;height:13px;background:#414141;border-radius:0 0 2px 2px"></div>
<svg style="left:1345px;top:272px" width="28" height="9" stroke="#ccc" stroke-width="1.200"><path d="M4 1V8M.5 4.500H7.500M20 4.500H26"/></svg>

<div class="tri" style="left:1078px;top:292px"></div><b style="left:1088px;top:288px;color:#b0b0b0">Lighting</b>
<i style="left:1098px;top:302px;color:#a8a8a8">Cast Shadows</i><div class="dd" style="left:1207px;top:302px;width:180px"><i>On</i></div>
<i style="left:1098px;top:316.500px;color:#a8a8a8">Static Shadow Caster</i><div class="cb" style="left:1206px;top:317px"></div>
<div style="left:1098px;top:331px;width:106px;height:13px;overflow:hidden"><i style="left:0;top:0;color:#a8a8a8">Contribute Global Illumination</i></div><div class="cb ck" style="left:1206px;top:332px"></div>
<div style="left:1098px;top:345.500px;width:106px;height:13px;overflow:hidden"><i style="left:0;top:0;color:#a8a8a8">Receive Global Illumination</i></div><div class="dd" style="left:1207px;top:346px;width:180px"><i>Lightmaps</i></div>
<div class="tri" style="left:1078px;top:365px"></div><b style="left:1088px;top:360.500px;color:#b0b0b0">Lightmapping</b>
<i style="left:1098px;top:375px;color:#a8a8a8">Scale In Lightmap</i><div class="f" style="left:1206px;top:374px;width:182px"><i>1</i></div>
<i style="left:1098px;top:389.500px;color:#a8a8a8">Stitch Seams</i><div class="cb ck" style="left:1206px;top:390px"></div>
<i style="left:1098px;top:404px;color:#a8a8a8">Lightmap Parameters</i><div class="dd" style="left:1207px;top:404px;width:145px"><i>Scene Default Parameters</i></div>
<div style="left:1356px;top:404px;width:31px;height:11px;background:#505050;border-radius:2px"></div><i style="left:1360px;top:403.500px;color:#c4c4c4">Edit...</i>
<div class="tri" style="left:1090px;top:423px"></div><i style="left:1098px;top:419px">Baked Lightmap</i>

<svg style="left:1108px;top:432px" width="73" height="73"><rect width="73" height="73" fill="#1c1c1c"/><rect x="2" y="2" width="69" height="69" fill="#8d9188"/><rect x="2" y="2" width="35" height="20" fill="#6d7f8a"/><rect x="37" y="2" width="34" height="18" fill="#8b9086"/><rect x="2" y="20" width="22" height="36" fill="#637989"/><rect x="24" y="20" width="24" height="8" fill="#7f7f82"/><rect x="24" y="28" width="22" height="28" fill="#9ba5a0"/><rect x="2" y="50" width="22" height="21" fill="#87877f"/><rect x="24" y="50" width="22" height="14" fill="#6a4a1e"/><rect x="18" y="60" width="53" height="11" fill="#3d3d3d"/></svg>
<i class="s8" style="left:1127px;top:492px;color:#aaa">Open Preview</i>
<i class="info" style="left:1206px;top:433px">Lightmap Index: 0</i>
<i class="info" style="left:1206px;top:446.500px">Tiling X: 0.944487</i>
<i class="info" style="left:1206px;top:460.500px">Tiling Y: 0.944487</i>
<i class="info" style="left:1206px;top:474px">Offset X: -0.003830618</i>
<i class="info" style="left:1206px;top:488px">Offset Y: -0.003830618</i>
<i class="info" style="left:1206px;top:502px">Lightmap Resolution: 20</i>
<i class="info" style="left:1206px;top:515.500px">Lightmap Object Scale: 1</i>

<div class="tri" style="left:1078px;top:538px"></div><b style="left:1088px;top:534px;color:#b0b0b0">Probes</b>
<i style="left:1098px;top:548.500px;color:#6c6c6c">Light Probes</i><div class="dd" style="left:1207px;top:548px;width:180px;background:#464646;color:#7a7a7a"><i>Off</i></div>
<i style="left:1098px;top:563px;color:#a8a8a8">Anchor Override</i><div class="f" style="left:1206px;top:562.500px;width:182px"><i class="n">None (Transform)</i></div>
<svg style="left:1375px;top:563px" width="11" height="11" fill="none" stroke="#aaa"><circle cx="5.500" cy="5.500" r="3.800"/><circle cx="5.500" cy="5.500" r="1.200" fill="#aaa"/></svg>
<div class="tri" style="left:1078px;top:581px"></div><b style="left:1088px;top:577.500px;color:#b0b0b0">Additional Settings</b>
<i style="left:1098px;top:592px;color:#a8a8a8">Dynamic Occlusion</i><div class="cb ck" style="left:1206px;top:593px"></div>
<i style="left:1098px;top:606.500px;color:#a8a8a8">Rendering Layer Mask</i><div class="dd" style="left:1207px;top:607px;width:180px"><i>0: Light Layer default</i></div>

<div class="sep" style="left:1074px;top:625px;width:318px"></div>
<div class="hd" style="top:626px"></div>
<div class="tri" style="left:1078px;top:631px"></div>
<svg style="left:1088px;top:628px" width="11" height="11"><path d="M5.500 .3 10.500 2.800 5.500 5.300.5 2.800Z" fill="#c7ec6e"/><path d="M.4 3.500 5 5.800V11L.4 8.500Z" fill="#9ccc3c"/><path d="M10.600 3.500 6 5.800V11L10.600 8.500Z" fill="#86b62a"/></svg>
<div class="cb ck" style="left:1103px;top:629px"></div>
<b style="left:1117px;top:628px">Box Collider</b>
<svg style="left:1347px;top:629px" width="24" height="9"><use href="#h" width="42" height="10"/></svg>
<div class="dots" style="left:1380px;top:633px"></div>
<i style="left:1087px;top:645px;color:#a8a8a8">Edit Collider</i>
<div style="left:1205px;top:645px;width:24px;height:17px;background:#3a3a3a;border:1px solid #262626;border-radius:3px;box-sizing:border-box"></div>
<svg style="left:1211px;top:648px" width="12" height="11" fill="none" stroke="#ccc"><path d="M2 7 4.500 2.500H7L10 7M2 7V10M10 7V9"/><rect x=".5" y="7.500" width="2.500" height="2.500"/><rect x="8.500" y="6.500" width="2.500" height="2.500"/></svg>
<i style="left:1087px;top:666.500px;color:#a8a8a8">Is Trigger</i><div class="cb" style="left:1206px;top:667px"></div>
<i style="left:1087px;top:681px;color:#a8a8a8">Material</i><div class="f" style="left:1206px;top:680.500px;width:182px"><i class="n">None (Physic Material)</i></div>
<svg style="left:1375px;top:681px" width="11" height="11" fill="none" stroke="#aaa"><circle cx="5.500" cy="5.500" r="3.800"/><circle cx="5.500" cy="5.500" r="1.200" fill="#aaa"/></svg>
<i style="left:1087px;top:695.500px;color:#a8a8a8">Center</i>
<i class="dim" style="left:1207px;top:695.500px;color:#999">X</i><div class="f" style="left:1217px;top:695px;width:47px"><i>0</i></div>
<i class="dim" style="left:1268.500px;top:695.500px;color:#999">Y</i><div class="f" style="left:1278px;top:695px;width:47px"><i>0</i></div>
<i class="dim" style="left:1330px;top:695.500px;color:#999">Z</i><div class="f" style="left:1340px;top:695px;width:48px"><i>0</i></div>
<i style="left:1087px;top:710px;color:#a8a8a8">Size</i>
<i class="dim" style="left:1207px;top:710px;color:#999">X</i><div class="f" style="left:1217px;top:709px;width:47px"><i>1</i></div>
<i class="dim" style="left:1268.500px;top:710px;color:#999">Y</i><div class="f" style="left:1278px;top:709px;width:47px"><i>1</i></div>
<i class="dim" style="left:1330px;top:710px;color:#999">Z</i><div class="f" style="left:1340px;top:709px;width:48px"><i>1</i></div>
<div style="left:1085px;top:733px;width:24px;height:3px;background:#555"></div>

<!-- separators -->
<div style="left:235px;top:53px;width:2px;height:412px;background:#191919"></div>
<div style="left:1072px;top:53px;width:2px;height:683px;background:#191919"></div>
<div style="left:0;top:463px;width:1072px;height:2px;background:#191919"></div>

<!-- status -->
<div style="left:0;top:736px;width:1400px;height:16px;background:#191919"></div>
<svg style="left:2px;top:739px" width="10" height="10"><path d="M5 .5 9.800 9.500H.2Z" fill="#e8b020"/><path d="M5 3.500V6.500M5 7.500V8.500" stroke="#222"/></svg>
<i style="left:15px;top:738px;color:#d3a21c;font-size:9.120px">There are 19 objects in the Scene with overlapping UV's. Please see the details list below or use the 'UV Overlap' visualisation mode in the Scene View or Lightmaps in Lighting Settings for more information.</i>
<svg style="left:1326px;top:738px" width="72" height="13" fill="#aaa"><ellipse cx="7" cy="7" rx="3.500" ry="5"/><path d="M2 2 12 12M12 2 2 12M0 7H14" stroke="#aaa" fill="none"/><ellipse cx="26" cy="3.500" rx="5" ry="2.200"/><ellipse cx="26" cy="7" rx="5" ry="2.200"/><ellipse cx="26" cy="10.500" rx="5" ry="2.200"/><circle cx="45" cy="7" r="4" fill="none" stroke="#aaa" stroke-width="2"/><path d="M40 2 50 12" stroke="#aaa"/><circle cx="64" cy="7" r="4.800" fill="none" stroke="#aaa"/><path d="M61.500 7 63.500 9 66.800 5" fill="none" stroke="#ccc"/></svg>
</div></body></html>
